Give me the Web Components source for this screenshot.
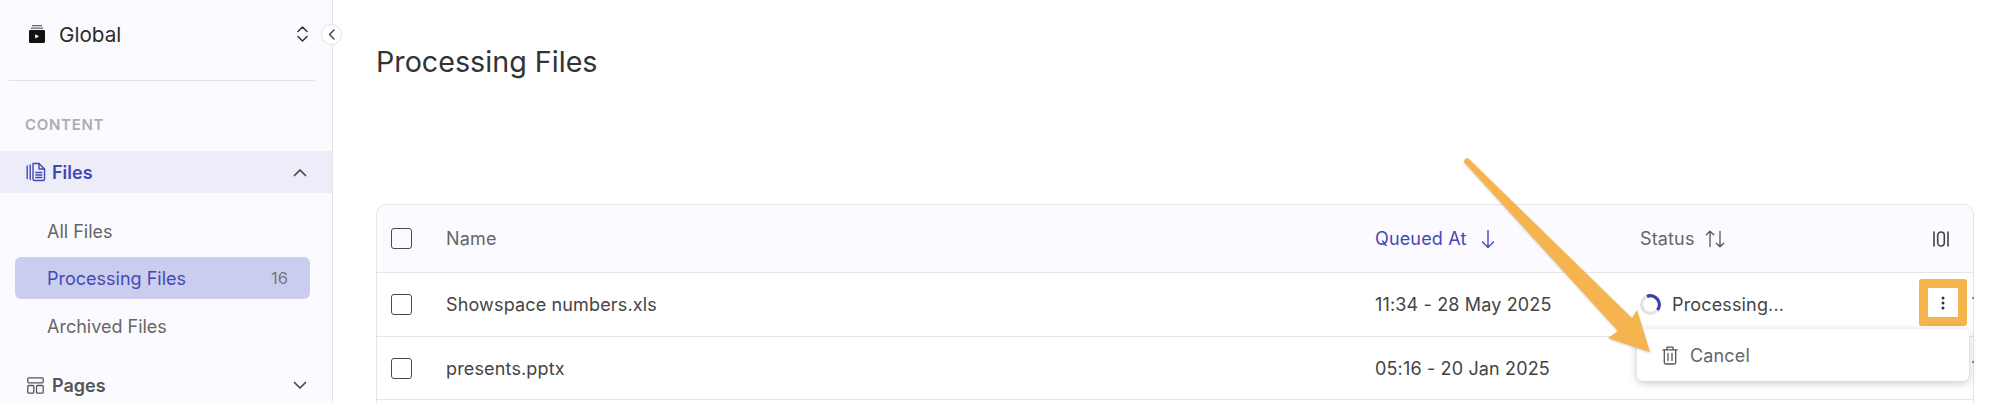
<!DOCTYPE html>
<html lang="en"><head><meta charset="utf-8"><title>Processing Files</title>
<style>
html,body{margin:0;height:403px;overflow:hidden;background:#fff;font-family:Inter,"Liberation Sans",sans-serif}
</style></head><body>
<app-shell>
  <side-bar slot="side"></side-bar>
  <main-view slot="main"></main-view>
</app-shell>
<script>
const ICON = {
  box:'<svg width="16" height="18" viewBox="0 0 16 18"><path d="M3 0h10v1.300H3zM1.800 2.400h12.400v1.400H1.800z" fill="#666"/><path d="M1.200 5h13.600A1.200 1.200 0 0 1 16 6.200v10.200a1.600 1.600 0 0 1-1.600 1.600H1.600A1.600 1.600 0 0 1 0 16.400V6.200A1.200 1.200 0 0 1 1.200 5z" fill="#111"/><path d="M6.200 9.200l3.800 2.100-3.800 2.100z" fill="#fff"/></svg>',
  updown:'<svg width="11" height="16" viewBox="0 0 11 16" fill="none" stroke="#333" stroke-width="1.500" stroke-linecap="round" stroke-linejoin="round"><path d="M1 5.500L5.500 1 10 5.500M1 10.500L5.500 15 10 10.500"/></svg>',
  files:'<svg width="20" height="20" viewBox="0 0 20 20" fill="none" stroke="#4349b4" stroke-width="1.400" stroke-linejoin="round" stroke-linecap="round" style="margin-left:1px"><path d="M1.200 4v12.500M4.200 3v14.500"/><path d="M7 1.500h6l5.500 5.500v10a1.500 1.500 0 0 1-1.500 1.500H8.500A1.500 1.500 0 0 1 7 17z"/><path d="M13 1.500V7h5.500M9.800 10.500h6M9.800 13h6M9.800 15.500h6"/></svg>',
  up:'<svg width="14" height="9" viewBox="0 0 14 9" fill="none" stroke="#444" stroke-width="1.700" stroke-linecap="round" stroke-linejoin="round"><path d="M1.500 7.500L7 2l5.500 5.500"/></svg>',
  down:'<svg width="14" height="9" viewBox="0 0 14 9" fill="none" stroke="#444" stroke-width="1.700" stroke-linecap="round" stroke-linejoin="round"><path d="M1.500 1.500L7 7l5.500-5.500"/></svg>',
  pages:'<svg width="17" height="17" viewBox="0 0 17 17" fill="none" stroke="#555" stroke-width="1.300" stroke-linejoin="round" style="margin-left:2px"><rect x=".8" y=".8" width="15.400" height="5" rx="1"/><rect x=".8" y="8.500" width="6" height="7.700" rx="1"/><rect x="9.500" y="8.500" width="6.700" height="7.700" rx="1"/></svg>',
  sortDown:'<svg width="14" height="20" viewBox="0 0 14 20" fill="none" stroke="#4349b4" stroke-width="1.400" stroke-linecap="round" stroke-linejoin="round"><path d="M7 1.500v17M1.500 13L7 18.500 12.500 13"/></svg>',
  sortBoth:'<svg width="20" height="18" viewBox="0 0 20 18" fill="none" stroke="#555" stroke-width="1.300" stroke-linecap="round" stroke-linejoin="round"><path d="M5 16.500V1.200M1.300 4.800L5 1.200l3.700 3.600M15 1.500v15.300M11.300 13.200L15 16.800l3.700-3.600"/></svg>',
  cols:'<svg width="16" height="16" viewBox="0 0 16 16" fill="none" stroke="#444" stroke-width="1.600" stroke-linecap="round"><path d="M1 1v14M15 1v14"/><rect x="4.700" y="1" width="6.600" height="14" rx="3.300"/></svg>',
  kebab:'<svg width="4" height="14" viewBox="0 0 4 14" fill="#333"><circle cx="2" cy="2" r="1.500"/><circle cx="2" cy="7" r="1.500"/><circle cx="2" cy="12" r="1.500"/></svg>',
  trash:'<svg width="16" height="19" viewBox="0 0 16 19" fill="none" stroke="#555" stroke-width="1.300" stroke-linecap="round" stroke-linejoin="round"><path d="M.8 3.800h14.400M5 3.800V1.200h6v2.600M2.300 3.800v12.700a1.500 1.500 0 0 0 1.500 1.500h8.400a1.500 1.500 0 0 0 1.500-1.500V3.800M6 7.500v7M10 7.500v7"/></svg>',
  collapse:'<svg width="7" height="11" viewBox="0 0 7 11" fill="none" stroke="#333" stroke-width="1.300" stroke-linecap="round" stroke-linejoin="round"><path d="M6 1L1.500 5.500 6 10"/></svg>',
  spin:'<svg width="21" height="21" viewBox="0 0 21 21" fill="none" stroke-width="3.200" style="flex:none"><circle cx="10.500" cy="10.500" r="8.900" stroke="#e3e3e6"/><path d="M7 2.400A8.900 8.900 0 0 1 17.500 16" stroke="#3a41ad"/></svg>'
};
function def(name, css, html){
  customElements.define(name, class extends HTMLElement{
    constructor(){super();const r=this.attachShadow({mode:'open'});
      r.innerHTML='<style>'+css+'</style>'+html;}
  });
}
def('app-shell',':host{display:flex;width:1999px;height:403px;overflow:hidden;position:relative}','<slot name="side"></slot><slot name="main"></slot>');

def('nav-item',`
:host{display:flex;align-items:center;height:42px;font-size:18px}
:host([kind=head]){font-weight:600;color:#555;padding:0 25px 0 25px;gap:5px}
:host([kind=head][open]){background:#ecedf8;color:#4349b4}
:host([kind=sub]){margin:0 22px 0 15px;padding:0 22px 0 10px;border-radius:6px;color:#666}
:host([kind=sub][active]){background:#cbcdef;color:#4349b4}
.t{flex:1}.ic{display:flex;width:22px}
::slotted([slot=end]){font-size:16.500px;font-weight:400;color:#777}
`,'<span class="ic"><slot name="icon"></slot></span><span class="t"><slot></slot></span><slot name="end"></slot>');

def('side-bar',`
:host{display:block;width:332px;height:403px;flex:none;background:#fbfbff;border-right:1px solid #e4e4e8;position:relative}
.top{display:flex;align-items:center;height:68px;padding:0 24px 0 29px;gap:14px;font-size:20.700px;color:#2b2b2b}
.top span{flex:1}
.top svg{display:block}
hr{border:0;border-top:1px solid #e2e2e6;margin:12px 17px 0 9px}
.lbl{font-size:15px;font-weight:600;letter-spacing:.7px;color:#adadb0;padding:35px 0 0 25px;height:35px;line-height:18px}
.sub{padding:22px 0 6px}
.btn{position:absolute;left:321px;top:24px;width:19px;height:19px;border-radius:50%;background:#fff;border:1px solid #e2e2e6;display:flex;align-items:center;justify-content:center}
`,`<div class="top">${ICON.box}<span>Global</span>${ICON.updown}</div><hr>
<div class="lbl">CONTENT</div>
<nav-item kind="head" open><span slot="icon" style="display:flex">${ICON.files}</span>Files<span slot="end" style="display:flex">${ICON.up}</span></nav-item>
<div class="sub">
<nav-item kind="sub" style="height:32px;margin-bottom:10px">All Files</nav-item>
<nav-item kind="sub" active>Processing Files<span slot="end">16</span></nav-item>
<nav-item kind="sub" style="height:32px;margin-top:11px">Archived Files</nav-item>
</div>
<nav-item kind="head" style="margin-top:16px"><span slot="icon" style="display:flex">${ICON.pages}</span>Pages<span slot="end" style="display:flex">${ICON.down}</span></nav-item>
<div class="btn">${ICON.collapse}</div>`);

def('check-box',':host{display:block;width:19px;height:19px;border:1.500px solid #4a4a4a;border-radius:3px;flex:none}','');

def('data-row',`
:host{display:grid;grid-template-columns:55px 929px 265px 1fr;align-items:center;border-top:1px solid #e6e6ea;height:64px;padding-left:14px;font-size:18px;letter-spacing:.15px;color:#444;box-sizing:border-box}
:host([head]){border-top:0;height:67px;background:#fbfbff;color:#666;border-radius:10px 10px 0 0}
.st{display:flex;align-items:center}
`,'<slot name="check"></slot><slot name="name"></slot><slot name="time"></slot><div class="st"><slot name="status"></slot></div>');

def('main-view',`
:host{display:block;flex:1;padding:0 25px 0 43px;min-width:0;position:relative}
h1{margin:0;font-weight:400;font-size:28.700px;color:#333;height:204px;line-height:34px;padding-top:45px;box-sizing:border-box}
.tbl{border:1px solid #e6e6ea;border-bottom:0;border-radius:10px 10px 0 0;height:240px}
.h{display:flex;align-items:center;gap:15px}
.q{color:#4349b4}
.grow{display:flex;align-items:center;width:100%}
.grow>span{flex:1;display:flex;align-items:center;gap:10px}
.grow>span.p{gap:11px}
.colsic{margin-right:24px;display:flex}
.kb{position:absolute;left:1586px;top:279px;width:48px;height:47px;box-sizing:border-box;border:9px solid #f6b44f;border-radius:3px;background:#fff;display:flex;align-items:center;justify-content:center}
.menu{position:absolute;left:1304px;top:329px;width:332px;height:52px;background:#fff;border-radius:6px;box-shadow:0 2px 8px rgba(0,0,0,.22);display:flex;align-items:center;gap:12px;padding-left:25px;box-sizing:border-box;font-size:18px;letter-spacing:.15px;color:#666}
.dot{position:absolute;left:1639px;width:2px;height:2px;background:#666;border-radius:50%}
.arrow{position:absolute;left:1100px;top:150px;pointer-events:none;filter:drop-shadow(0 1px 1px rgba(0,0,0,.2))}
`,`<h1>Processing Files</h1>
<div class="tbl">
<data-row head><check-box slot="check"></check-box><span slot="name">Name</span><span slot="time" class="h q">Queued At ${ICON.sortDown}</span><div slot="status" class="grow"><span>Status ${ICON.sortBoth}</span><div class="colsic">${ICON.cols}</div></div></data-row>
<data-row><check-box slot="check"></check-box><span slot="name">Showspace numbers.xls</span><span slot="time">11:34 - 28 May 2025</span><div slot="status" class="grow"><span class="p">${ICON.spin}Processing...</span></div></data-row>
<data-row style="height:63px"><check-box slot="check"></check-box><span slot="name">presents.pptx</span><span slot="time">05:16 - 20 Jan 2025</span></data-row>
<data-row></data-row>
</div>
<i class="dot" style="top:297px"></i><i class="dot" style="top:361px"></i>
<div class="kb">${ICON.kebab}</div>
<div class="menu">${ICON.trash}<span>Cancel</span></div>
<svg class="arrow" width="230" height="215" viewBox="1433 150 230 215"><path d="M1464 162Q1464 158.500 1468 158L1632 318 1637 310 1650 352 1608 338 1618 331z" fill="#f6b44f"/></svg>
`);
</script>
</body></html>
